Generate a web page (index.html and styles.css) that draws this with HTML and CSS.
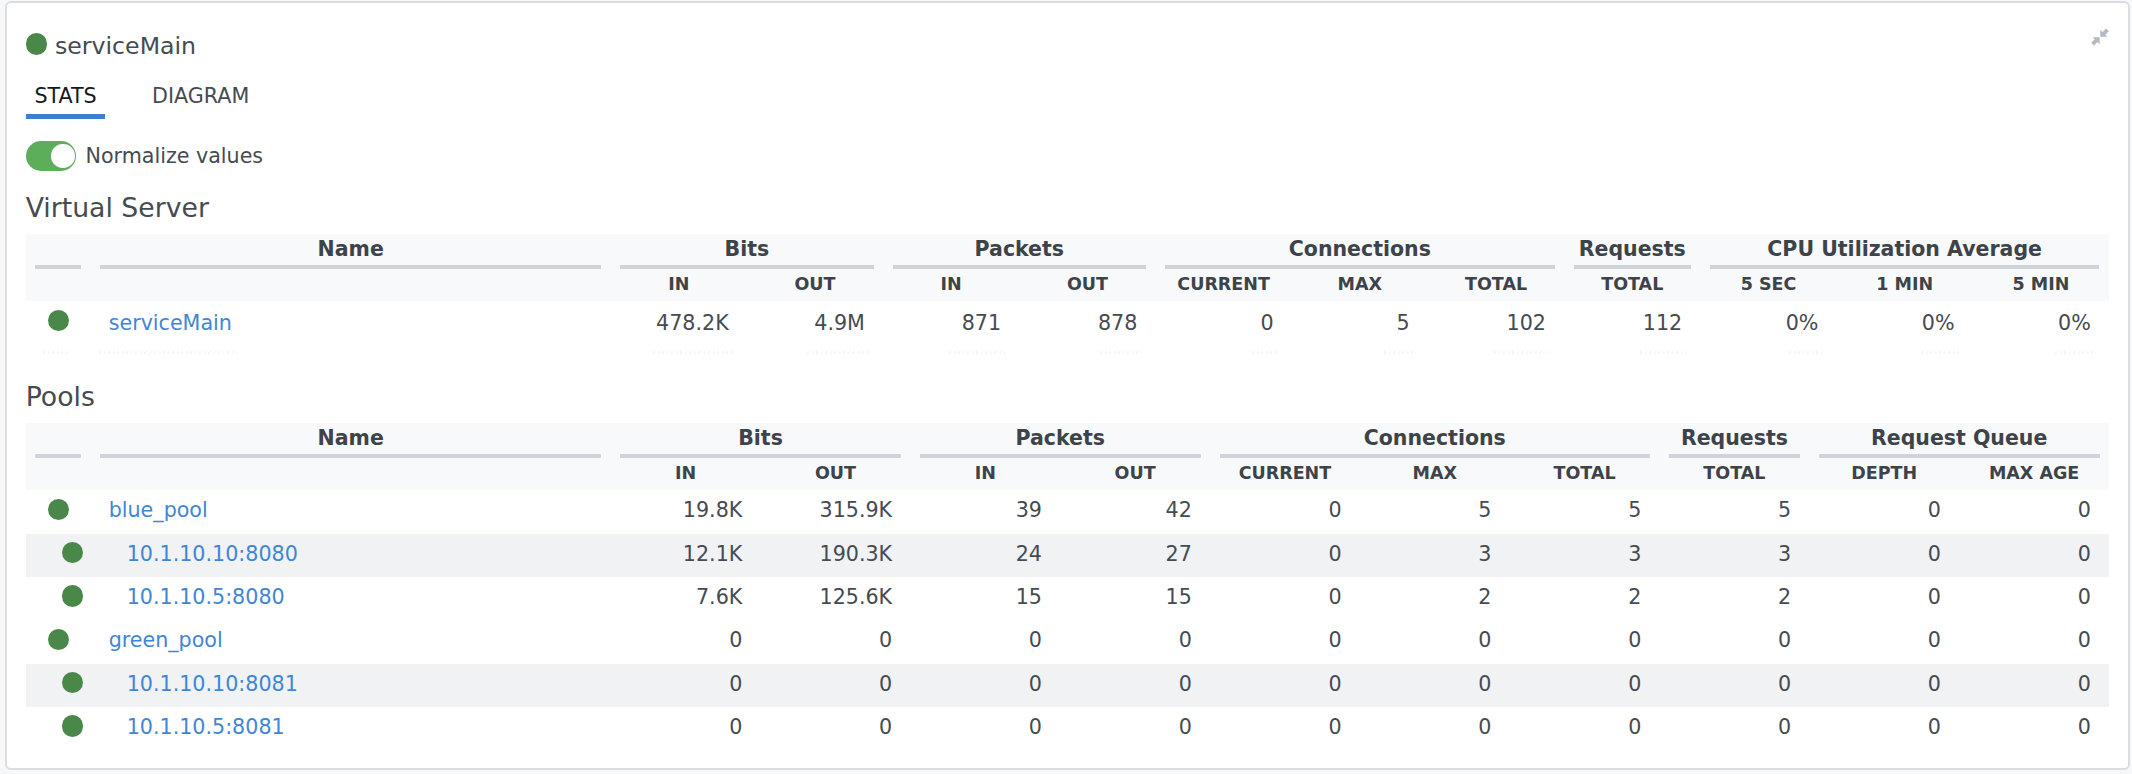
FILE: index.html
```html
<!DOCTYPE html>
<html lang="en">
<head>
<meta charset="utf-8">
<title>serviceMain</title>
<link rel="stylesheet" href="styles.css">
</head>
<body>
<main class="card">
  <svg class="collapse" viewBox="0 0 18 18"><path d="M9.300 1.700v7h7l-2-2 3.500-3.500-2.800-2.800-3.500 3.500zM8.700 16.300v-7h-7l2 2L.2 14.800l2.800 2.800 3.500-3.500z"/></svg>
  <header class="title"><span class="dot"></span><span>serviceMain</span></header>
  <nav class="tabs"><span class="tab active">STATS</span><span class="tab">DIAGRAM</span></nav>
  <div class="option"><span class="toggle"><span class="knob"></span></span><span>Normalize values</span></div>

  <h2>Virtual Server</h2>
  <section class="table server">
    <div class="groups">
      <b class="i"></b><b class="n">Name</b><b class="s2">Bits</b><b class="s2">Packets</b><b class="s3">Connections</b><b>Requests</b><b class="s3">CPU Utilization Average</b>
    </div>
    <div class="subs">
      <b></b><b></b><b>IN</b><b>OUT</b><b>IN</b><b>OUT</b><b>CURRENT</b><b>MAX</b><b>TOTAL</b><b>TOTAL</b><b>5 SEC</b><b>1 MIN</b><b>5 MIN</b>
    </div>
    <div class="row"><span class="state"><span class="dot"></span></span><a>serviceMain</a><span>478.2K</span><span>4.9M</span><span>871</span><span>878</span><span>0</span><span>5</span><span>102</span><span>112</span><span>0%</span><span>0%</span><span>0%</span></div>
    <div class="fade"><i class="w26"></i><i class="w138"></i><i class="w80"></i><i class="w62"></i><i class="w56"></i><i class="w42"></i><i class="w26"></i><i class="w30"></i><i class="w56"></i><i class="w46"></i><i class="w34"></i><i class="w38"></i><i class="w40"></i></div>
  </section>

  <h2>Pools</h2>
  <section class="table pools">
    <div class="groups">
      <b class="i"></b><b class="n">Name</b><b class="s2">Bits</b><b class="s2">Packets</b><b class="s3">Connections</b><b>Requests</b><b class="s2">Request Queue</b>
    </div>
    <div class="subs">
      <b></b><b></b><b>IN</b><b>OUT</b><b>IN</b><b>OUT</b><b>CURRENT</b><b>MAX</b><b>TOTAL</b><b>TOTAL</b><b>DEPTH</b><b>MAX AGE</b>
    </div>
    <div class="row"><span class="state"><span class="dot"></span></span><a>blue_pool</a><span>19.8K</span><span>315.9K</span><span>39</span><span>42</span><span>0</span><span>5</span><span>5</span><span>5</span><span>0</span><span>0</span></div>
    <div class="row member shaded"><span class="state"><span class="dot"></span></span><a>10.1.10.10:8080</a><span>12.1K</span><span>190.3K</span><span>24</span><span>27</span><span>0</span><span>3</span><span>3</span><span>3</span><span>0</span><span>0</span></div>
    <div class="row member"><span class="state"><span class="dot"></span></span><a>10.1.10.5:8080</a><span>7.6K</span><span>125.6K</span><span>15</span><span>15</span><span>0</span><span>2</span><span>2</span><span>2</span><span>0</span><span>0</span></div>
    <div class="row"><span class="state"><span class="dot"></span></span><a>green_pool</a><span>0</span><span>0</span><span>0</span><span>0</span><span>0</span><span>0</span><span>0</span><span>0</span><span>0</span><span>0</span></div>
    <div class="row member shaded"><span class="state"><span class="dot"></span></span><a>10.1.10.10:8081</a><span>0</span><span>0</span><span>0</span><span>0</span><span>0</span><span>0</span><span>0</span><span>0</span><span>0</span><span>0</span></div>
    <div class="row member"><span class="state"><span class="dot"></span></span><a>10.1.10.5:8081</a><span>0</span><span>0</span><span>0</span><span>0</span><span>0</span><span>0</span><span>0</span><span>0</span><span>0</span><span>0</span></div>
  </section>
</main>
</body>
</html>
```
FILE: styles.css
```css
* { box-sizing: border-box; }
html, body { height: 100%; }
body {
  margin: 0;
  padding: 1px 2px 4px 5px;
  background: #f6f8fa;
  color: #454b51;
  font: 20.65px/24px "DejaVu Sans", sans-serif;
  overflow: hidden;
}
.card {
  position: relative;
  height: 769px;
  padding: 26px 19px 0 18.700px;
  background: #fff;
  border: 2px solid #d9dde2;
  border-radius: 6px;
}
.collapse { position: absolute; top: 25px; right: 19px; width: 18px; height: 18px; fill: #b3bac1; }
.dot { flex: none; width: 21.300px; height: 21.300px; border-radius: 50%; background: #4a8849; }

.title { display: flex; align-items: center; gap: 8px; height: 34px; font-size: 23.650px; }
.title .dot { margin-bottom: 4px; }
.tabs { display: flex; gap: 38px; margin-top: 15px; height: 41px; }
.tab { padding: 6px 8.700px 0; line-height: 24px; border-bottom: 5px solid transparent; }
.tab.active { color: #17191b; border-color: #3b7fd4; }
.option { display: flex; align-items: center; gap: 9.300px; height: 30px; margin: 22px 0 21px; }
.toggle { display: flex; justify-content: flex-end; align-items: center; width: 50.500px; height: 30px; padding-right: 1.500px; border-radius: 15px; background: #5dae5b; }
.knob { width: 23.500px; height: 23.500px; border-radius: 50%; background: #fff; }

h2 { margin: 20px 0 10px; height: 32px; font-size: 26.700px; font-weight: 400; line-height: 32px; }

.table { --cols: 11; }
.pools { --cols: 10; }
.groups, .subs, .row, .fade { display: grid; grid-template-columns: 65px 520px repeat(var(--cols), 1fr); }
.groups, .subs { background: #f7f9fb; color: #3d4349; text-align: center; }
.groups { height: 35px; font-size: 20.500px; }
.groups b { margin: 0 9.500px; border-bottom: 4px solid #ced4da; line-height: 30px; white-space: nowrap; }
.s2 { grid-column: span 2; }
.s3 { grid-column: span 3; }
.subs { height: 32.400px; font-size: 17.500px; line-height: 31px; }
.row { height: 43.300px; line-height: 41px; }
.row > span { padding-right: 18.200px; text-align: right; }
.row > a { padding-left: 18px; color: #3f86d6; }
.row > .state { display: flex; padding: 8.500px 0 0 22px; }
.row.member > .state { padding-left: 36px; }
.row.member > a { padding-left: 36px; }
.row.shaded { background: #f0f2f4; }
.server .row { height: 49px; line-height: 44px; }
.fade { height: 10.600px; justify-items: end; padding-top: 1px; }
.fade i { height: 3px; margin-right: 14px; background: repeating-linear-gradient(100deg, #f5f5f5 0 2px, #fff 2px 5px, #f8f8f8 5px 7px, #fff 7px 9px); }
.fade i:nth-child(1) { margin-right: 22px; }
.fade i:nth-child(2) { justify-self: start; margin-left: 8px; }
.w26 { width: 26px; } .w30 { width: 30px; } .w34 { width: 34px; } .w38 { width: 38px; }
.w40 { width: 40px; } .w42 { width: 42px; } .w46 { width: 46px; } .w56 { width: 56px; }
.w62 { width: 62px; } .w80 { width: 80px; } .w138 { width: 138px; }
```
